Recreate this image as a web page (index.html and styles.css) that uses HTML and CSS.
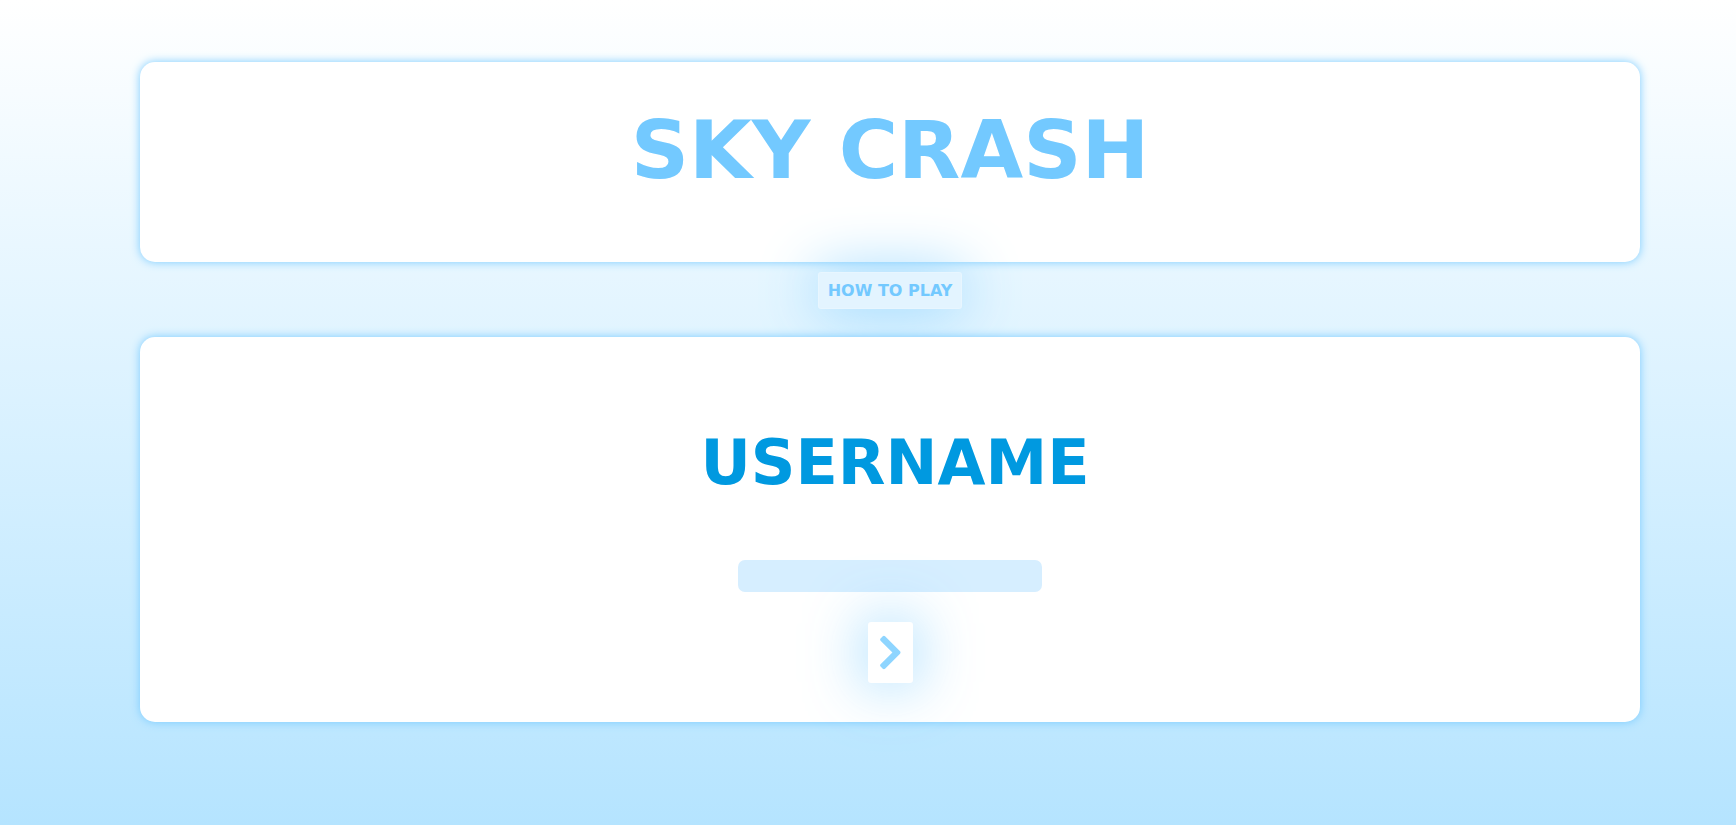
FILE: index.html
```html
<!DOCTYPE html>
<html lang="en">
<head>
  <meta charset="utf-8">
  <meta name="viewport" content="width=device-width, initial-scale=1">
  <title>Sky Crash</title>
  <link rel="stylesheet" href="styles.css">
</head>
<body>
  <main class="page">
    <header class="card banner">
      <h1 class="title">SKY CRASH</h1>
    </header>
    <button class="button help" type="button">HOW TO PLAY</button>
    <form class="card login">
      <label class="label" for="username">USERNAME</label>
      <input class="field" id="username" name="username" type="text" autocomplete="off">
      <button class="button next" type="button" aria-label="Continue">
        <svg class="chevron" viewBox="0 0 22 36" aria-hidden="true">
          <path d="M.6 5.6Q-.4 4.5.6 3.4L2.9 1Q4.1 0 5.3 1L21 16.8Q22 18 21 19.2L5.3 35Q4.1 36 2.9 35L.6 32.6Q-.4 31.5.6 30.4L13 18Z"/>
        </svg>
      </button>
    </form>
  </main>
</body>
</html>
```
FILE: styles.css
```css
* {
  box-sizing: border-box;
}

body {
  margin: 0;
  min-height: 100vh;
  background: linear-gradient(#ffffff, #b5e4ff);
  font-family: "DejaVu Sans", sans-serif;
  font-weight: bold;
}

.page {
  display: flex;
  flex-direction: column;
  align-items: center;
  padding: 62px 96px 64px 140px;
}

.card {
  width: 100%;
  background: #ffffff;
  border-radius: 15px;
  box-shadow: 0 0 10px #78cbff;
}

.banner {
  padding: 38px 24px 62px;
}

.title {
  margin: 0;
  color: #73c9ff;
  font-size: 81px;
  line-height: 100px;
  text-align: center;
}

.button {
  position: relative;
  border: 1px solid rgba(255, 255, 255, 0.2);
  border-radius: 3px;
  color: #73c9ff;
  font: inherit;
  cursor: pointer;
}

.help {
  margin: 10px 0 28px;
  padding: 8px 9px;
  background: #e3f4ff;
  font-size: 16px;
  line-height: 19px;
  box-shadow: 0 0 60px #8cd2ff;
}

.login {
  position: relative;
  display: flex;
  flex-direction: column;
  align-items: center;
  padding: 86px 24px 39px;
}

.label {
  color: #0099e0;
  font-size: 62px;
  line-height: 80px;
  padding-left: 10px;
}

.field {
  width: 304px;
  max-width: 100%;
  height: 32px;
  margin: 57px 0 30px;
  padding: 4px 10px;
  border: 0;
  border-radius: 7px;
  background: #d6eeff;
  color: #0099e0;
  font: inherit;
  font-size: 16px;
}

.next {
  display: flex;
  padding: 12px 11px;
  background: #ffffff;
  box-shadow: 0 0 60px rgba(115, 201, 255, 0.8);
}

.chevron {
  width: 21px;
  height: 35px;
  fill: #8ed5ff;
}
```
